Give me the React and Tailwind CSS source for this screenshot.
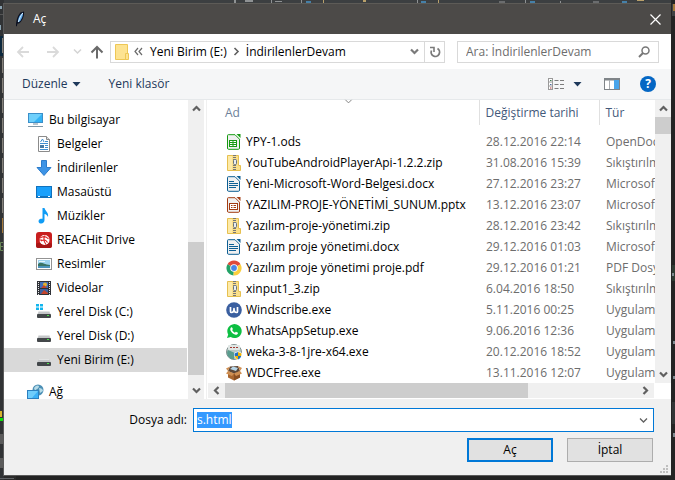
import { ChevronDown } from 'lucide-react';

const Svg = ({ w = 16, h = 16, children, className = '' }) => (
  <svg width={w} height={h} viewBox={`0 0 ${w} ${h}`} className={`block shrink-0 ${className}`} aria-hidden="true">
    {children}
  </svg>
);

/* ---------- small glyphs ---------- */
const arrows = {
  up: 'M2 7.5 5.5 4 9 7.5',
  down: 'M2 3.5 5.5 7 9 3.5',
  left: 'M7.5 2 4 5.5 7.5 9',
  right: 'M3.5 2 7 5.5 3.5 9',
};
const Chevron = ({ dir, color = '#606060', width = 2.2, className }) => (
  <Svg w={11} h={11} className={className}>
    <path d={arrows[dir]} fill="none" stroke={color} strokeWidth={width} />
  </Svg>
);

const Feather = () => (
  <Svg>
    <path d="M4 15C4 11 5 5 8.500 1.500L12 0.500C12.500 5 10.500 10 7 12.500L5.500 12.500 4.800 15.500Z" fill="#0b1020" />
    <path d="M6 11C6 7 7.500 3.500 11 1.500 11.300 5 9.500 9 7 11.200Z" fill="#5aa5e6" />
    <path d="M6.200 11C7.500 8 8.500 5 10.800 2" stroke="#d9efff" fill="none" />
  </Svg>
);

const Pc = () => (
  <Svg w={17}>
    <rect x="1" y="1" width="15" height="10" fill="#3b8fc9" />
    <rect x="2" y="2" width="13" height="8" fill="#33b3f5" />
    <path d="M2 2H15L7 10H2Z" fill="#6fd0fb" />
    <rect x="6" y="11" width="5" height="2" fill="#b9c6cf" />
    <rect x="1" y="14" width="15" height="1" fill="#7e98a8" />
  </Svg>
);
const Docs = () => (
  <Svg>
    <path d="M2.500.5H10.500L13.500 3.500V15.500H2.500Z" fill="#fff" stroke="#8b8b8b" />
    <path d="M10.500.5V3.500H13.500" fill="#ddd" stroke="#8b8b8b" />
    <path d="M4.500 6 6.500 3 8 6M4 7.500H12M9 5.500H12M9 9.500H12M9 11.500H12M4 13.500H12" stroke="#3f8fd2" fill="none" />
    <rect x="4" y="9" width="4" height="3" fill="#477ba6" />
  </Svg>
);
const Down = () => (
  <Svg>
    <path d="M5.500.5H10.500V7.500H15L8 15.500 1 7.500H5.500Z" fill="#3d94e6" stroke="#2c7ccb" />
  </Svg>
);
const Desktop = () => (
  <Svg>
    <rect x="0" y="2" width="16" height="12" fill="#1172bd" />
    <rect x="1" y="3" width="14" height="9" fill="#1aa0fb" />
    <path d="M2 12.500H4M12 12.500H14" stroke="#fff" />
  </Svg>
);
const Music = () => (
  <Svg>
    <path d="M6.500 0H8.500C9 3 13 4.500 12 9 11.500 7.500 10 6 8.500 6V12C8.500 14.500 6.500 16 4.500 15.500 2 15 2 12 4 11 5 10.500 6 10.600 6.500 10.800Z" fill="#109cf5" />
  </Svg>
);
const Reach = () => (
  <Svg>
    <rect width="16" height="16" rx="3" fill="#c81e1e" />
    <rect y="11" width="16" height="5" rx="2" fill="#a81515" />
    <circle cx="8.500" cy="8" r="5" fill="#fff" />
    <path d="M4 6C7 4 10 4 12.500 7M5 9C8 7 10 8 11.500 10.500M9 3.500C7 7 8 10 10 12.500M3 8H6" fill="none" stroke="#d22" strokeWidth="1.100" />
  </Svg>
);
const Pictures = () => (
  <Svg>
    <rect x=".5" y="2.500" width="15" height="11" fill="#fff" stroke="#939393" />
    <rect x="2" y="4" width="12" height="8" fill="#9cd3ef" />
    <path d="M2 8C5 5 7 8 14 9V10H2Z" fill="#3a7465" />
    <rect x="2" y="10" width="12" height="2" fill="#4b93bb" />
    <path d="M3 5.500H9" stroke="#e6f6fc" />
  </Svg>
);
const Video = () => (
  <Svg>
    <rect x="1" y="1" width="14" height="14" fill="#2f3238" />
    <rect x="4" y="2" width="8" height="6" fill="#4170be" />
    <rect x="4" y="9" width="8" height="5" fill="#3c62a0" />
    <circle cx="9" cy="4.500" r="2" fill="#e4b32d" />
    <path d="M5 8 8 5 11 8ZM5 14 8 10 12 13V14Z" fill="#c4442c" />
    <path d="M2.500 2V15M13.500 2V15" stroke="#e8e8e8" strokeDasharray="1 1" />
  </Svg>
);
const Drive = ({ win }) => (
  <Svg>
    <path d="M3 7H13L15 11H1Z" fill="#c4c6c8" />
    <path d="M3 7H13L13.500 8H2.500Z" fill="#e2e3e4" />
    <rect x="1" y="10" width="14" height="4" rx="1" fill="#43474a" />
    <rect x="11" y="11" width="2" height="1" fill="#4be04b" />
    {win && <path d="M0 0H3V2.500H0ZM4 0H7V2.500H4ZM0 3.500H3V6H0ZM4 3.500H7V6H4Z" fill="#12b5ee" />}
  </Svg>
);
const Network = () => (
  <Svg w={17}>
    <circle cx="11" cy="6" r="5.500" fill="#4c8fb5" />
    <path d="M7 4C9 1 11 1 12 2 12 5 9 5 8 7ZM12 4C14 4 16 5 16 7L13 9Z" fill="#b5dbe8" />
    <rect x=".5" y="6.500" width="11" height="8" fill="#3bb0f6" stroke="#2c7fbf" />
    <path d="M1 7H11L5 14H1Z" fill="#6fccfb" />
  </Svg>
);

/* ---------- file icons ---------- */
const Office = ({ color, kind }) => (
  <Svg>
    <path d="M1.500 1.500Q1.500.7 2.300.7H9L13.500 5.200V14Q13.500 15.300 12.500 15.300H2.500Q1.500 15.300 1.500 14Z" fill="#f0f0f0" stroke={color} />
    <path d="M10.500 0H14.500V4Z" fill={color} />
    {kind === 'calc' && (
      <>
        <rect x="3" y="6" width="8" height="7" fill={color} />
        <path d="M4 7H6.500V8H4ZM7.500 7H10V8H7.500ZM4 9H6.500V10H4ZM7.500 9H10V10H7.500ZM4 11H6.500V12H4ZM7.500 11H10V12H7.500Z" fill="#fff" />
      </>
    )}
    {kind === 'text' && <path d="M3 5.500H8M3 7.500H12M3 9.500H12M3 11.500H10" stroke={color} />}
    {kind === 'show' && (
      <>
        <rect x="3.500" y="6.500" width="8" height="6" fill="#fff" stroke={color} />
        <path d="M5 8.500H6.500M7.500 8.500H10M5 10.500H6.500M7.500 10.500H10" stroke={color} />
      </>
    )}
  </Svg>
);
const Zip = () => (
  <Svg>
    <path d="M1.500.5H12.500V10.500H14.500V15.500H1.500Z" fill="#fbe08a" stroke="#e6c050" />
    <path d="M2 1H6V15H2Z" fill="#fdeaa8" />
    <path d="M8.500 0V6M8.500 10V16" stroke="#777" strokeWidth="3" strokeDasharray="1 1" />
    <rect x="7.500" y="4.500" width="3" height="5" rx="1" fill="#e9edf0" stroke="#68737b" />
  </Svg>
);
const Chrome = () => (
  <Svg>
    <path d="M8 8 1.500 4.200A7.500 7.500 0 0 1 14.500 4.200Z" fill="#e04a3a" />
    <path d="M8 8 1.500 4.200A7.500 7.500 0 0 0 7.500 15.500Z" fill="#23a267" />
    <path d="M8 8 14.500 4.200A7.500 7.500 0 0 1 7.500 15.500Z" fill="#fbcf3f" />
    <circle cx="8" cy="8" r="3.800" fill="#fff" />
    <circle cx="8" cy="8" r="2.900" fill="#4a86e8" />
  </Svg>
);
const Wind = () => (
  <Svg>
    <circle cx="8" cy="8" r="7.800" fill="#3a5fa0" />
    <path d="M4.500 5V9.500Q4.500 10.500 5.500 10.500 8 10.500 8 6.500 8 10.500 10.500 10.500 11.500 10.500 11.500 9.500V5" fill="none" stroke="#fff" strokeWidth="1.700" strokeLinejoin="round" />
  </Svg>
);
const WhatsApp = () => (
  <Svg>
    <path d="M1 15 2.200 11.500A7.200 7 0 1 1 4.800 14.100Z" fill="#0dbf42" />
    <path d="M5 4.500C6 3.800 6.500 5 6.800 6 6.800 6.800 6 7 6.400 7.600 7 8.700 8 9.400 8.800 9.700 9.500 9.500 9.700 8.700 10.300 8.900L12 9.800C12 11.500 10.500 12 9.500 11.800 7 11.200 5 9 4.400 7.300 4.100 6 4.500 5 5 4.500Z" fill="#fff" />
  </Svg>
);
const Weka = () => (
  <Svg>
    <circle cx="8" cy="8" r="7.500" fill="#b9c9c4" stroke="#80908f" />
    <path d="M2 6A6 6 0 0 0 8 15L9 9Z" fill="#5a9c8e" />
    <rect x="2" y="1" width="12" height="5" rx="1" fill="#dfe6e4" />
    <path d="M4 3.500H12" stroke="#a23b34" strokeDasharray="2 1" />
    <path d="M8 9 12 7.500 16 9C16 13 14.500 15 12 16 9.500 15 8 13 8 9Z" fill="#fff" />
    <path d="M8.500 9.500 12 8V12H8.800ZM12 12H15.200C14.800 13.800 13.500 15 12 15.500Z" fill="#2270c4" />
    <path d="M12 8 15.500 9.500 15.200 12H12ZM8.800 12H12V15.500C10.500 15 9.200 13.800 8.800 12Z" fill="#f4b400" />
  </Svg>
);
const Box = () => (
  <Svg>
    <path d="M2 6 8 8.500 14 6V12.500L8 15.500 2 12.500Z" fill="#a9662f" />
    <path d="M8 8.500 14 6V12.500L8 15.500Z" fill="#8a4f22" />
    <path d="M2 6 4 1.500 12 1 14 6 8 8.500Z" fill="#5c4636" />
    <path d="M4 4 7 1.500 12 3 10 6Z" fill="#b6d5e8" />
    <path d="M2 6 0 8.500 6 11 8 8.500ZM14 6 16 8.500 10 11 8 8.500ZM2 6 0 3.500 4 1.500ZM14 6 16 3 12 1Z" fill="#cf8f52" />
  </Svg>
);

const places = [
  ['Belgeler', <Docs />],
  ['İndirilenler', <Down />],
  ['Masaüstü', <Desktop />],
  ['Müzikler', <Music />],
  ['REACHit Drive', <Reach />],
  ['Resimler', <Pictures />],
  ['Videolar', <Video />],
  ['Yerel Disk (C:)', <Drive win />],
  ['Yerel Disk (D:)', <Drive />],
  ['Yeni Birim (E:)', <Drive />],
];

const calc = <Office color="#169a12" kind="calc" />;
const word = <Office color="#0d5f94" kind="text" />;
const show = <Office color="#a33c12" kind="show" />;

const files = [
  [calc, 'YPY-1.ods', '28.12.2016 22:14', 'OpenDoc'],
  [<Zip />, 'YouTubeAndroidPlayerApi-1.2.2.zip', '31.08.2016 15:39', 'Sıkıştırılm'],
  [word, 'Yeni-Microsoft-Word-Belgesi.docx', '27.12.2016 23:27', 'Microsof'],
  [show, 'YAZILIM-PROJE-YÖNETİMİ_SUNUM.pptx', '13.12.2016 23:07', 'Microsof'],
  [<Zip />, 'Yazılım-proje-yönetimi.zip', '28.12.2016 23:42', 'Sıkıştırılm'],
  [word, 'Yazılım proje yönetimi.docx', '29.12.2016 01:03', 'Microsof'],
  [<Chrome />, 'Yazılım proje yönetimi proje.pdf', '29.12.2016 01:21', 'PDF Dosy'],
  [<Zip />, 'xinput1_3.zip', '6.04.2016 18:50', 'Sıkıştırılm'],
  [<Wind />, 'Windscribe.exe', '5.11.2016 00:25', 'Uygulam'],
  [<WhatsApp />, 'WhatsAppSetup.exe', '9.06.2016 12:36', 'Uygulam'],
  [<Weka />, 'weka-3-8-1jre-x64.exe', '20.12.2016 18:52', 'Uygulam'],
  [<Box />, 'WDCFree.exe', '13.11.2016 12:07', 'Uygulam'],
];

/* The editor window that peeks out around the dialog. */
function EditorBehind() {
  return (
    <Svg w={675} h={480} className="absolute top-0 left-0">
      <rect width="675" height="3" fill="#3c3f41" />
      <rect width="4" height="480" fill="#313335" />
      <rect y="14" width="3" height="1" fill="#555" />
      <rect y="36" width="3" height="20" fill="#0d293e" />
      <path d="M0 6H2V9H0ZM0 25H1V30H0Z" fill="#8aa2b0" />
      <path d="M2.500 38V215" stroke="#85817a" strokeDasharray="15 5" />
      <rect x="2" y="218" width="1" height="15" fill="#a67a3c" />
      <path d="M3 242.500H.5V250.500H3M.5 246.500H3" fill="none" stroke="#6a8759" />
      <rect y="411" width="2" height="6" fill="#d8b42c" />
      <rect y="418" width="3" height="3" fill="#0be00b" />
      <path d="M0 434H3V444H0ZM0 458H3V468H0Z" fill="#5b5b5b" />
      <path d="M0 478.500H14" stroke="#606366" />
      <path d="M16 476H675V480H16Z" fill="#232323" />
      <path d="M234 0H236V3H234ZM245 0H253V2H245ZM271 0H272V3H271ZM275 1H282V2H275ZM301 0H302V3H301ZM417 0H418V3H417ZM525 0H526V3H525ZM560 1H561V3H560Z" fill="#8f9294" />
      <path d="M306 1H311V3H306ZM421 1H426V3H421ZM530 1H535V3H530ZM622 1H627V3H622Z" fill="#4580a8" />
      <path d="M323 0H324V3H323ZM438 0H439V3H438ZM363 0H366V2H363ZM637 0H644V1H637Z" fill="#b9a06a" />
      <path d="M499 1H505V3H499ZM593 1H599V3H593Z" fill="#6a6c6e" />
      <rect x="671" width="4" height="480" fill="#242424" />
      <rect x="672" y="4" width="3" height="12" fill="#3f4244" />
      <rect x="673" y="4" width="2" height="7" fill="#a67a3c" />
      <rect x="672" y="265" width="3" height="16" fill="#2f3b33" />
      <path d="M672 273H674V276H672ZM673 341H675V344H673ZM673 376H675V379H673ZM673 433H675V437H673Z" fill="#7f8b91" />
      <rect x="672" y="402" width="3" height="22" fill="#323536" />
    </Svg>
  );
}

function TitleBar() {
  return (
    <header className="flex h-[31px] items-center border-t border-[#5d5b57] bg-[#4c4a48] pl-2 text-white">
      <Feather />
      <h1 className="ml-[5px] flex-1">Aç</h1>
      <button aria-label="Kapat" className="flex h-full w-8 items-center justify-center">
        <Svg w={11} h={11}>
          <path d="M.5.5 10.500 10.500M10.500.5.5 10.500" stroke="#fff" strokeWidth="1.200" />
        </Svg>
      </button>
    </header>
  );
}

function AddressRow() {
  return (
    <div className="flex h-[35px] items-center bg-white pr-3">
      <button aria-label="Geri" className="ml-3">
        <Svg w={14} h={12}><path d="M13 6H2M7 1 2 6 7 11" fill="none" stroke="#dadada" strokeWidth="1.800" /></Svg>
      </button>
      <button aria-label="İleri" className="ml-4">
        <Svg w={14} h={12}><path d="M1 6H12M7 1 12 6 7 11" fill="none" stroke="#dadada" strokeWidth="1.800" /></Svg>
      </button>
      <button aria-label="Son konumlar" className="ml-3"><Chevron dir="down" color="#d4d4d4" width={1.5} /></button>
      <button aria-label="Yukarı" className="ml-[7px]">
        <Svg w={14} h={14}><path d="M7 13.500V2M1.500 7.500 7 2 12.500 7.500" fill="none" stroke="#6a6a6a" strokeWidth="2" /></Svg>
      </button>
      <nav aria-label="Adres" className="ml-[6px] flex h-[22px] flex-1 items-center border border-[#d9d9d9] pl-1 text-black">
        <Svg w={14} h={18}>
          <path d="M.5 1.500H12.500V10.500H13.500V16.500H.5Z" fill="#fde391" stroke="#eec755" />
          <path d="M10.500 16V10.500H13" fill="none" stroke="#eec755" />
        </Svg>
        <Svg w={9} h={9} className="ml-[5px]"><path d="M4 1 1 4.500 4 8M8 1 5 4.500 8 8" fill="none" stroke="#6a6a6a" strokeWidth="1.200" /></Svg>
        <button className="ml-[7px]">Yeni Birim (E:)</button>
        <Chevron dir="right" className="mx-1" width={1.6} />
        <button>İndirilenlerDevam</button>
        <span className="flex-1" />
        <button aria-label="Önceki konumlar" className="mr-1"><Chevron dir="down" color="#7a7a7a" /></button>
        <button aria-label="Yenile" className="flex h-full w-5 items-center justify-center border-l border-[#d9d9d9]">
          <Svg w={12} h={12}>
            <path d="M8.500 2.600A4.200 4.200 0 1 1 2.500 4.500" fill="none" stroke="#7a7a7a" strokeWidth="1.800" />
            <path d="M1 1.500H5V6" fill="none" stroke="#7a7a7a" strokeWidth="1.600" />
          </Svg>
        </button>
      </nav>
      <label className="ml-3 flex h-[22px] w-[202px] items-center border border-[#d9d9d9] px-2">
        <input aria-label="Ara" placeholder="Ara: İndirilenlerDevam" className="min-w-0 flex-1 outline-none placeholder:text-[#6d6d6d]" />
        <Svg w={12} h={12}>
          <circle cx="7.500" cy="4.500" r="3.500" fill="none" stroke="#777" strokeWidth="1.500" />
          <path d="M5 7 1 11" stroke="#777" strokeWidth="2" />
        </Svg>
      </label>
    </div>
  );
}

function Toolbar() {
  return (
    <div className="flex h-[31px] items-center border-b border-[#e6e9eb] bg-[#f5f6f7] pr-[15px] pl-[18px] text-[#1e395b]">
      <button className="flex items-center gap-1">
        Düzenle
        <Svg w={9} h={5}><path d="M.5 0H8.500L4.500 4.500Z" fill="#1e395b" /></Svg>
      </button>
      <button className="ml-7">Yeni klasör</button>
      <span className="flex-1" />
      <button aria-label="Görünüm" className="flex items-center gap-2">
        <Svg w={17} h={12}>
          <rect x=".5" y=".5" width="4" height="11" fill="#fff" stroke="#9a9a9a" />
          <path d="M1 4H5M1 8H5" stroke="#9a9a9a" />
          <path d="M2 2.500H3.500" stroke="#3a7a4a" /><path d="M2 6.500H3.500" stroke="#4a6aa0" /><path d="M2 10H3.500" stroke="#b03030" />
          <path d="M6.500 2.500H16M6.500 6.500H16M6.500 10.500H16" stroke="#7d7d7d" strokeDasharray="4 1.500" />
        </Svg>
        <Svg w={9} h={5}><path d="M.5 0H8.500L4.500 4.500Z" fill="#1e395b" /></Svg>
      </button>
      <button aria-label="Önizleme bölmesi" className="ml-[22px]">
        <Svg w={16} h={12}>
          <rect x=".5" y=".5" width="15" height="11" fill="#fff" stroke="#7f8488" />
          <rect x="0" y="0" width="16" height="2.500" fill="#7f8488" />
          <path d="M5.500 2V11" stroke="#a8acb0" />
          <rect x="10" y="2" width="5" height="9" fill="#48a4ea" />
        </Svg>
      </button>
      <button aria-label="Yardım" className="ml-5 flex size-4 items-center justify-center rounded-full bg-[#0567c4] text-xs font-bold text-white">?</button>
    </div>
  );
}

function Sidebar() {
  return (
    <aside className="flex h-0 min-h-full w-[200px] overflow-hidden bg-white">
      <ul className="flex-1 pt-2">
        <li>
          <button className="flex h-6 w-full items-center gap-[5px] pl-[23px]"><Pc />Bu bilgisayar</button>
        </li>
        {places.map(([name, icon]) => (
          <li key={name}>
            <button className={`flex h-6 w-full items-center gap-[5px] pl-8 ${name === 'Yeni Birim (E:)' ? 'bg-[#d9d9d9]' : ''}`}>
              {icon}
              {name}
            </button>
          </li>
        ))}
        <li className="pt-2">
          <button className="flex h-6 w-full items-center gap-[5px] pl-[23px]"><Network />Ağ</button>
        </li>
      </ul>
      <div className="ml-px flex w-4 flex-col bg-[#f0f0f0]">
        <button aria-label="Yukarı kaydır" className="flex h-[17px] items-center justify-center"><Chevron dir="up" /></button>
        <span className="flex-1" />
        <div className="h-[133px] bg-[#cdcdcd]" />
        <button aria-label="Aşağı kaydır" className="flex h-6 items-start justify-center pt-[10px]"><Chevron dir="down" /></button>
      </div>
    </aside>
  );
}

function FileTable() {
  return (
    <table className="w-full table-fixed border-collapse text-left">
      <colgroup>
        <col />
        <col className="w-[120px]" />
        <col className="w-[56px]" />
      </colgroup>
      <thead>
        <tr className="h-[25px] text-[#43597a]">
          <th className="p-0 pl-3 font-normal">
            <div className="relative flex h-[25px] items-center pl-[5px]">
              <span className="text-[#6d7f99]">Ad</span>
              <ChevronDown size={11} strokeWidth={2} color="#7a7a7a" className="absolute -top-1 left-1/2 -ml-[6px]" />
            </div>
          </th>
          <th className="border-l border-[#e0e0e0] p-0 pl-[6px] font-normal whitespace-nowrap">Değiştirme tarihi</th>
          <th className="border-l border-[#e0e0e0] p-0 pl-[6px] font-normal">Tür</th>
        </tr>
        <tr className="h-[6px]"><td /></tr>
      </thead>
      <tbody>
        {files.map(([icon, name, date, type]) => (
          <tr key={name} className="h-[21px] text-[#6d6d6d]">
            <td className="p-0 pl-[18px] text-black">
              <div className="flex h-[21px] items-center gap-1 whitespace-nowrap">{icon}{name}</div>
            </td>
            <td className="p-0 pl-[7px] whitespace-nowrap">{date}</td>
            <td className="overflow-hidden p-0 pl-[7px] whitespace-nowrap">{type}</td>
          </tr>
        ))}
      </tbody>
    </table>
  );
}

function FilePane() {
  return (
    <main className="ml-[2px] min-w-0 flex-1 border-l border-[#f0f0f0] bg-white pl-px">
      <div className="flex">
        <div className="min-w-0 flex-1"><FileTable /></div>
        <div className="flex w-4 flex-col bg-[#f0f0f0]">
          <button aria-label="Yukarı kaydır" className="flex h-[17px] items-center justify-center"><Chevron dir="up" /></button>
          <div className="h-[17px] bg-[#cdcdcd]" />
          <span className="flex-1" />
          <button aria-label="Aşağı kaydır" className="flex h-[17px] items-center justify-center"><Chevron dir="down" /></button>
        </div>
      </div>
      <div className="mr-[17px] mb-px flex h-[15px] items-center bg-[#f0f0f0]">
        <button aria-label="Sola kaydır" className="flex w-[17px] justify-center"><Chevron dir="left" /></button>
        <div className="h-full w-[68%] bg-[#cdcdcd]" />
        <span className="flex-1" />
        <button aria-label="Sağa kaydır" className="flex w-[17px] justify-center"><Chevron dir="right" /></button>
      </div>
    </main>
  );
}

function Footer() {
  return (
    <footer className="relative flex-1 bg-[#f0f0f0] pt-[9px] pr-[17px] pb-[13px]">
      <div className="flex items-center">
        <label htmlFor="file-name" className="w-[189px] pr-[6px] text-right">Dosya adı:</label>
        <div className="flex h-6 flex-1 items-center border border-[#0078d7] bg-white pr-1 pl-[3px]">
          <input
            id="file-name"
            autoFocus
            defaultValue="s.html"
            onFocus={(e) => e.target.select()}
            className="h-4 min-w-0 flex-1 outline-none selection:bg-[#3399ff] selection:text-white"
          />
          <button aria-label="Önceki dosya adları"><Chevron dir="down" width={1.3} /></button>
        </div>
      </div>
      <div className="mt-[6px] flex justify-end gap-[14px] pr-px">
        <button className="h-6 w-[86px] border-2 border-[#0078d7] bg-[#e1e1e1]">Aç</button>
        <button className="h-6 w-[86px] border border-[#adadad] bg-[#e1e1e1]">İptal</button>
      </div>
      <Svg w={8} h={8} className="absolute right-[3px] bottom-[2px]">
        <path d="M6 0H8V2H6ZM3 3H5V5H3ZM6 3H8V5H6ZM0 6H2V8H0ZM3 6H5V8H3ZM6 6H8V8H6Z" fill="#bfbfbf" />
      </Svg>
    </footer>
  );
}

export default function App() {
  return (
    <div className="relative flex min-h-screen flex-col overflow-hidden bg-[#2b2b2b] pt-[3px] pr-[4px] pb-[4px] pl-[3px] font-['Open_Sans','Noto_Sans',sans-serif] text-[12px] leading-4 text-black">
      <EditorBehind />
      <div className="relative flex flex-1 flex-col border-b border-l border-[#5a5a5a]">
        <TitleBar />
        <AddressRow />
        <Toolbar />
        <div className="flex bg-white">
          <div><Sidebar /></div>
          <FilePane />
        </div>
        <Footer />
      </div>
    </div>
  );
}
